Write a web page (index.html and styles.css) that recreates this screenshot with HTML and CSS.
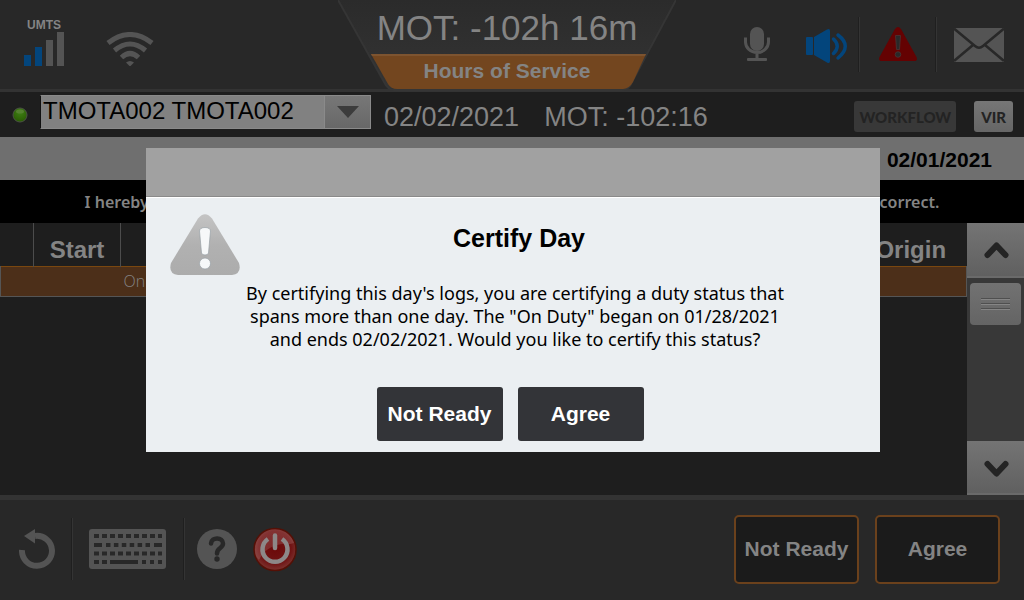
FILE: index.html
```html
<!DOCTYPE html>
<html lang="en">
<head>
<meta charset="utf-8">
<title>Hours of Service</title>
<link rel="stylesheet" href="styles.css">
</head>
<body>
<div class="app">
  <header class="top">
    <div class="top-side">
      <div class="signal">
        <span class="signal-label">UMTS</span>
        <svg width="40" height="34" viewBox="0 0 40 34" aria-hidden="true"><path class="blue" d="M0 23h7v11H0zM11 15h7v19h-7z"/><path class="grey" d="M22 8h7v26h-7zM33 0h7v34h-7z"/></svg>
      </div>
      <svg class="wifi" width="48" height="34" viewBox="0 0 48 34" role="img" aria-label="Wi-Fi"><g class="line" stroke-width="5"><path d="M2 11Q24-6 46 11"/><path d="M8.500 18.500Q24 5.500 39.500 18.500"/><path d="M15.500 25.500Q24 17.500 32.500 25.500"/></g><path class="grey" d="M20 30.500Q24 27.500 28 30.500L24 34.500z"/></svg>
    </div>
    <div class="badge">
      <svg class="badge-shape" width="338" height="92" viewBox="0 0 338 92" aria-hidden="true">
        <defs><linearGradient id="plate" x1="0" y1="0" x2="0" y2="1"><stop offset="0" stop-color="#2b2b2b"/><stop offset="1" stop-color="#343434"/></linearGradient></defs>
        <path d="M0 0L46 82Q50 89 56 89H284Q291 89 294 82L338 0z" fill="url(#plate)"/>
        <path d="M0 0L46 82Q50 90 56 90H284Q291 90 294 82L338 0" fill="none" stroke="#353535" stroke-width="2"/>
        <path d="M33 54H308L295 82Q291 89 285 89H59Q53 89 50 84z" fill="#73461f"/>
        <path d="M33 54H308L307 56H34z" fill="#7d5430"/>
      </svg>
      <div class="badge-time">MOT: -102h 16m</div>
      <div class="badge-title">Hours of Service</div>
    </div>
    <div class="top-side top-right">
      <svg class="mic" width="26" height="34" viewBox="0 0 26 34" role="img" aria-label="Microphone"><rect class="grey" x="6" y="0" width="14" height="24" rx="7"/><path class="line" stroke-width="3" d="M1.500 10.500V15A11.500 10.500 0 0 0 24.500 15V10.500M13 26v6"/><rect class="grey" x="3" y="31" width="20" height="3" rx="1"/></svg>
      <svg class="speaker" width="42" height="34" viewBox="0 0 42 34" role="img" aria-label="Volume"><rect class="blue" x="0" y="8" width="7" height="18" rx="1"/><path class="blue" d="M8 8L21 0.500Q24-1 24 2V32Q24 35 21 33.500L8 26z"/><path class="blue-line" stroke-width="3.500" d="M27.500 10Q35 17 27.500 24.500M32 6Q46.500 17 32 29"/></svg>
      <span class="sep"></span>
      <svg class="alert" width="38" height="34" viewBox="0 0 38 34" role="img" aria-label="Alert"><path fill="#640202" d="M16 2Q19-2 22 2L37.500 30Q39 34 35 34H3Q-1 34 .5 30z"/><path fill="#292929" stroke="#4a3a3a" stroke-width=".7" d="M16.500 8.500h5l-1 14h-3z"/><circle cx="19" cy="27.500" r="2.800" fill="#292929" stroke="#4a3a3a" stroke-width=".7"/></svg>
      <span class="sep"></span>
      <svg class="mail" width="50" height="34" viewBox="0 0 50 34" role="img" aria-label="Messages"><path class="grey" d="M0 0h50v34H0z"/><path fill="none" stroke="#282828" stroke-width="2.500" d="M0 0.500L21 18Q25 21.500 29 18L50 .5M0 33L19 17M50 33L31 17"/></svg>
    </div>
  </header>

  <div class="toolbar">
    <svg width="16" height="16" viewBox="0 0 16 16" role="img" aria-label="Online"><defs><radialGradient id="led" cx=".5" cy=".3" r=".8"><stop offset="0" stop-color="#3f8015"/><stop offset="1" stop-color="#265500"/></radialGradient></defs><circle cx="8" cy="8" r="7" fill="url(#led)" stroke="#4b5145"/><ellipse cx="8" cy="4.500" rx="4" ry="2" fill="#54822f"/></svg>
    <label class="driver">
      <select class="driver-select" aria-label="Driver"><option>TMOTA002 TMOTA002</option></select>
      <span class="driver-arrow"><svg width="22" height="12" viewBox="0 0 22 12" aria-hidden="true"><path fill="#3c3c3c" d="M0 0h22L11 12z"/></svg></span>
    </label>
    <span class="stat">02/02/2021</span>
    <span class="stat">MOT: -102:16</span>
    <span class="toolbar-actions">
      <button class="tag" disabled>WORKFLOW</button>
      <button class="tag tag-on">VIR</button>
    </span>
  </div>

  <div class="daybar">02/01/2021</div>
  <p class="notice">I hereby certify that my data entries and my record of duty status for this 24-hour period are true and correct.</p>

  <main class="log">
    <div class="log-table">
      <table>
        <thead><tr><th class="c-mark"></th><th class="c-start">Start</th><th></th><th class="c-origin">Origin</th></tr></thead>
        <tbody><tr><td></td><td></td><td>On Duty</td><td></td></tr></tbody>
      </table>
    </div>
    <div class="scroll">
      <button class="scroll-btn" aria-label="Scroll up"><svg width="25" height="18" viewBox="0 0 25 18" aria-hidden="true"><path class="chev" d="M3.500 14L12.500 4.500L21.500 14"/></svg></button>
      <div class="thumb"><i></i><i></i><i></i></div>
      <button class="scroll-btn scroll-down" aria-label="Scroll down"><svg width="25" height="18" viewBox="0 0 25 18" aria-hidden="true"><path class="chev" d="M3.500 4L12.500 13.500L21.500 4"/></svg></button>
    </div>
  </main>

  <footer class="bottom">
    <button class="icon back" aria-label="Back"><svg width="36" height="40" viewBox="0 0 36 40"><path fill="none" stroke="#545454" stroke-width="6" d="M3 21A15 15 0 1 0 16 7"/><path class="grey" d="M5 7L16 0V14.500z"/></svg></button>
    <span class="sep"></span>
    <button class="icon keys" aria-label="Keyboard"><svg width="77" height="40" viewBox="0 0 77 40"><rect class="grey" width="77" height="40" rx="3"/><g fill="none" stroke="#282828" stroke-width="4"><path stroke-dasharray="5 3" d="M5 7H73"/><path d="M5 16h8M65 16h8"/><path stroke-dasharray="4.500 3.400" d="M17 16H61"/><path stroke-dasharray="5 3" d="M5 24.500H73"/><path d="M5 33h5M13 33h5M21 33h28M53 33h4M61 33h4M69 33h4"/></g></svg></button>
    <span class="sep"></span>
    <button class="icon help" aria-label="Help"><svg width="40" height="40" viewBox="0 0 40 40"><circle class="grey" cx="20" cy="20" r="20"/><path fill="none" stroke="#282828" stroke-width="4.500" stroke-linecap="round" d="M14 14.500C14.500 7.500 26 8 26 14.500C26 19.500 20 18.500 20 24.500"/><circle cx="20" cy="30" r="2.700" fill="#282828"/></svg></button>
    <button class="icon power" aria-label="Power"><svg width="44" height="46" viewBox="0 0 44 46"><defs><radialGradient id="pw" cx=".5" cy=".45" r=".55"><stop offset="0" stop-color="#6c0808"/><stop offset=".7" stop-color="#701414"/><stop offset="1" stop-color="#7c3430"/></radialGradient></defs><circle cx="22" cy="23.500" r="21" fill="url(#pw)" stroke="#541006" stroke-width="1.500"/><path fill="#fff" fill-opacity=".13" d="M2 24A20 20 0 0 1 41 17Q36 19 29 18Q13 20 6 34Q2 30 2 24z"/><path fill="none" stroke="#8d8888" stroke-width="4.500" d="M15 13A12.500 12.500 0 1 0 29 13"/><path stroke="#8d8888" stroke-width="4.500" stroke-linecap="round" d="M22 9.500V22"/></svg></button>
    <span class="bottom-actions">
      <button class="outline">Not Ready</button>
      <button class="outline">Agree</button>
    </span>
  </footer>
</div>

<div class="overlay">
  <section class="dialog" role="dialog" aria-modal="true" aria-labelledby="dlg-title">
    <div class="dialog-head"></div>
    <div class="dialog-body">
      <svg class="dialog-icon" width="70" height="62" viewBox="0 0 70 62" aria-hidden="true"><defs><linearGradient id="warn" x1="0" y1="0" x2="0" y2="1"><stop offset="0" stop-color="#c4c4c4"/><stop offset=".5" stop-color="#b1b1b1"/><stop offset="1" stop-color="#acacac"/></linearGradient></defs><path fill="url(#warn)" d="M28 4.500Q35-4 42 4.500L69 49Q72 60 62 61H8Q-2 60 1 49z"/><path fill="#f6f8f9" stroke="#98a0a6" stroke-width=".7" d="M29.500 17Q30 13.500 35 13.500T40.500 17L38.500 39Q38 41 35 41T31.500 39z"/><circle cx="35" cy="49.500" r="5.500" fill="#f6f8f9" stroke="#98a0a6" stroke-width=".7"/></svg>
      <h1 id="dlg-title" class="dialog-title">Certify Day</h1>
      <p class="dialog-text">By certifying this day's logs, you are certifying a duty status that<br>spans more than one day. The "On Duty" began on 01/28/2021<br>and ends 02/02/2021. Would you like to certify this status?</p>
      <div class="dialog-actions">
        <button class="solid">Not Ready</button>
        <button class="solid">Agree</button>
      </div>
    </div>
  </section>
</div>
</body>
</html>
```
FILE: styles.css
```css
* { box-sizing: border-box; }

body {
  margin: 0;
  background: #1e1e1e;
  color: #848484;
  font-family: "Liberation Sans", Arial, sans-serif;
}

svg { display: block; flex: none; }
button { font: inherit; color: inherit; border: 0; padding: 0; cursor: pointer; }

.grey { fill: #545454; }
.blue { fill: #03457c; }
.line { fill: none; stroke: #545454; }
.blue-line { fill: none; stroke: #03457c; stroke-linecap: round; }
.chev { fill: none; stroke: #242424; stroke-width: 6; stroke-linecap: round; stroke-linejoin: round; }

.app { display: flex; flex-direction: column; min-height: 100vh; }

/* Status header */
.top {
  display: grid;
  grid-template-columns: 1fr 338px 1fr;
  height: 92px;
  padding-right: 10px;
  background: #282828;
  border-bottom: 3px solid #333;
}
.top-side { display: flex; align-items: flex-start; }
.signal { display: flex; flex-direction: column; align-items: center; padding: 19px 0 0 24px; }
.signal-label { font-size: 12px; font-weight: bold; line-height: 13px; }
.wifi { margin: 32px 0 0 42px; }
.badge { position: relative; text-align: center; }
.badge-shape { position: absolute; inset: 0; width: 100%; }
.badge-time { position: relative; font-size: 35px; line-height: 54px; padding-top: 1px; }
.badge-title { position: relative; font-size: 21px; font-weight: bold; line-height: 32px; }
.top-right { justify-content: flex-end; padding-right: 10px; }
.sep { width: 2px; height: 55px; background: #1f1f1f; border-right: 1px solid #343434; }
.top-right .sep { margin-top: 17px; }
.mic { margin: 27px 36px 0 0; }
.speaker { margin: 29px 10px 0 0; }
.alert { margin: 27px 18px 0 19px; }
.mail { margin: 28px 0 0 17px; }

/* Driver toolbar */
.toolbar {
  display: flex;
  align-items: center;
  height: 45px;
  padding: 0 11px 0 12px;
}
.driver {
  display: flex;
  width: 331px;
  height: 34px;
  margin: 0 13px 6px 12px;
  background: #818181;
  border: 1px solid #8a8a8a;
  border-left-color: #111;
}
.driver-select {
  flex: 1;
  appearance: none;
  padding: 0 0 2px 2px;
  border: 0;
  background: none;
  color: #000;
  font: 24px "Liberation Sans", Arial, sans-serif;
}
.driver-arrow {
  display: grid;
  place-items: center;
  width: 46px;
  border-left: 1px solid #8a8a8a;
  background: linear-gradient(#777, #686868);
}
.stat { margin-right: 25px; padding-top: 4px; font-size: 27px; line-height: 30px; white-space: nowrap; }
.toolbar-actions { display: flex; gap: 18px; margin-left: auto; padding-top: 4px; }
.tag {
  height: 31px;
  padding: 0 5px;
  border-radius: 3px;
  background: #383838;
  color: #232323;
  font: 900 15px Lato, sans-serif;
}
.tag-on { padding: 0 7px; background: linear-gradient(#767676, #666); }

/* Day and statement bars */
.daybar {
  height: 43px;
  padding-right: 32px;
  background: #6f6f6f;
  color: #000;
  font-size: 21px;
  font-weight: bold;
  line-height: 45px;
  text-align: right;
}
.notice {
  height: 43px;
  margin: 0;
  background: #000;
  font: 600 16px/45px "Noto Sans", sans-serif;
  text-align: center;
  white-space: nowrap;
}

/* Log table */
.log { display: flex; flex: 1; }
.log-table { flex: 1; }
.log table { width: 100%; border-collapse: collapse; table-layout: fixed; }
.log th {
  height: 43px;
  padding: 12px 0 0;
  border-right: 1px solid #4c4c4c;
  font-size: 24px;
  line-height: 30px;
}
.log th:last-child { border-right: 0; }
.c-mark { width: 33px; }
.c-start { width: 87px; }
.c-origin { width: 112px; }
.log tbody tr { background: #4c2f19; border: 1px solid #555; border-top-color: #7a470f; }
.log td { height: 30px; padding: 0 3px; font: 300 16px "Open Sans", sans-serif; }
.scroll {
  display: flex;
  flex-direction: column;
  width: 57px;
  background: #383838;
}
.scroll-btn {
  display: grid;
  place-items: center;
  height: 55px;
  padding-left: 2px;
  background: linear-gradient(#747474, #606060);
  border-bottom: 2px solid #6a6a6a;
}
.scroll-down { height: 54px; margin-top: auto; padding-top: 3px; }
.thumb {
  display: grid;
  align-content: center;
  justify-content: center;
  gap: 3px;
  height: 42px;
  margin: 5px 3px 0;
  border-radius: 4px;
  background: linear-gradient(#727272, #646464);
}
.thumb i { width: 29px; height: 2px; background: #4f4f4f; border-bottom: 1px solid #858585; }

/* Footer */
.bottom {
  display: flex;
  align-items: center;
  height: 105px;
  padding: 0 24px 2px 19px;
  background: #282828;
  border-top: 5px solid #333;
}
.bottom .sep { height: 62px; }
.icon { background: none; }
.back { margin-right: 16px; }
.keys { margin: 0 17px 0 16px; }
.help { margin: 0 16px 0 12px; }
.bottom-actions { display: flex; gap: 16px; margin-left: auto; }
.outline {
  width: 125px;
  height: 69px;
  border: 2px solid #6b411c;
  border-radius: 5px;
  background: #1b1b1b;
  font-size: 21px;
  font-weight: bold;
}

/* Dialog */
.overlay { position: fixed; inset: 0; display: grid; place-items: center; padding-left: 2px; }
.dialog { width: 734px; background: #ebeff2; }
.dialog-head { height: 49px; background: #a1a1a1; border-bottom: 1px solid #8a8a8a; }
.dialog-body {
  display: grid;
  grid-template-columns: 70px 1fr;
  padding: 0 24px 11px;
  border-top: 1px solid #fff;
  color: #000;
  text-align: center;
}
.dialog-icon { margin-top: 16px; }
.dialog-title { margin: 24px 0 0; padding-right: 58px; font-size: 25px; line-height: 32px; }
.dialog-text {
  grid-column: 1 / -1;
  margin: 6px 0 0;
  padding-left: 4px;
  font: 18px/23px "Noto Sans", sans-serif;
}
.dialog-actions {
  grid-column: 1 / -1;
  display: flex;
  justify-content: center;
  gap: 15px;
  margin-top: 36px;
  padding-right: 6px;
}
.solid {
  width: 126px;
  height: 54px;
  border-radius: 3px;
  background: #333438;
  color: #fff;
  font-size: 21px;
  font-weight: bold;
}
```
